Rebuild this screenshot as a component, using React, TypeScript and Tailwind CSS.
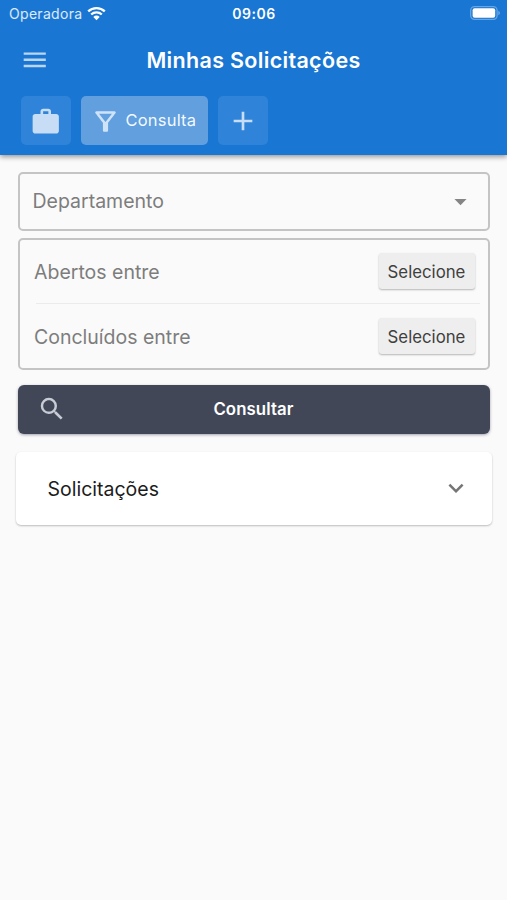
import type { ReactNode } from "react";
import {
  MdAdd,
  MdArrowDropDown,
  MdExpandMore,
  MdMenu,
  MdOutlineFilterAlt,
  MdSearch,
  MdWork,
} from "react-icons/md";

function WifiIcon() {
  return (
    <svg className="h-[15px] w-[19px]" viewBox="0 0 19 15" fill="none">
      <path
        d="M1.2 5.4a11.9 11.9 0 0 1 16.6 0M4.2 8.5a7.6 7.6 0 0 1 10.6 0"
        stroke="white"
        strokeWidth="2.3"
      />
      <path d="M6.3 10.9a4.6 4.6 0 0 1 6.4 0L9.5 14.2z" fill="white" />
    </svg>
  );
}

function BatteryIcon() {
  return (
    <svg className="h-[14px] w-[31px]" viewBox="0 0 31 14" fill="none">
      <rect
        x="0.7"
        y="0.7"
        width="26.4"
        height="12.6"
        rx="3.8"
        stroke="white"
        strokeOpacity="0.35"
        strokeWidth="1.3"
      />
      <rect x="2.6" y="2.3" width="22.6" height="9.4" rx="2" fill="white" />
      <path d="M28.4 4.8c2 .8 2 3.6 0 4.4z" fill="white" fillOpacity="0.4" />
    </svg>
  );
}

function StatusBar() {
  return (
    <div className="grid h-[26px] grid-cols-[1fr_auto_1fr] items-center pl-[9px] pr-[8px] text-[14px] text-white">
      <div className="flex items-center gap-[5px]">
        <span className="tracking-[0.3px] text-white/85">Operadora</span>
        <WifiIcon />
      </div>
      <span className="font-semibold tracking-[0.5px]">09:06</span>
      <div className="-mr-[2px] flex justify-end">
        <BatteryIcon />
      </div>
    </div>
  );
}

function TabButton({
  label,
  active = false,
  children,
}: {
  label: string;
  active?: boolean;
  children: ReactNode;
}) {
  return (
    <button
      type="button"
      aria-label={label}
      className={
        active
          ? "flex h-[49px] w-[127px] items-center gap-[5px] rounded-[5px] bg-[#619fdf] pl-[9px] text-[16.5px] tracking-[0.2px] text-white/95"
          : "flex h-[49px] w-[50px] items-center justify-center rounded-[5px] bg-[#2f83d8]"
      }
    >
      {children}
      {active && <span>{label}</span>}
    </button>
  );
}

function AppHeader() {
  return (
    <header className="h-[154.5px] bg-[#1976d2] shadow-[0_2px_5px_rgba(0,0,0,0.4)]">
      <StatusBar />
      <div className="grid h-[66px] grid-cols-[50px_1fr_50px] items-center px-5 pt-px">
        <MdMenu className="size-[29.5px] text-white/70" />
        <h1 className="pt-[2px] text-center text-[21.5px] font-semibold tracking-[0.32px] text-white">
          Minhas Solicitações
        </h1>
      </div>
      <nav className="flex gap-[10px] pl-[20.5px] pt-1">
        <TabButton label="Solicitações">
          <MdWork className="mt-[2px] size-[31.5px] text-[#c6ddf5]" />
        </TabButton>
        <TabButton label="Consulta" active>
          <MdOutlineFilterAlt className="mt-[2px] size-[31px] text-[#cfe3f8]" />
        </TabButton>
        <TabButton label="Adicionar">
          <MdAdd className="mt-px size-[32px] text-[#c6ddf5]" />
        </TabButton>
      </nav>
    </header>
  );
}

function DateRow({ label }: { label: string }) {
  return (
    <div className="flex h-16 items-center justify-between pl-[14.5px] pr-[13px]">
      <span className="pt-[2px] text-[19.5px] text-[#7d7d7d]">{label}</span>
      <button
        type="button"
        className="h-9 w-24 rounded-[3px] bg-[#eeeeee] pt-[2px] text-[16.8px] text-[#3f3f3f] shadow-[0_1px_2px_rgba(0,0,0,0.28)]"
      >
        Selecione
      </button>
    </div>
  );
}

export default function App() {
  return (
    <div className="min-h-[900px] w-full bg-[#fafafa] font-['Inter','Liberation_Sans',sans-serif]">
      <AppHeader />
      <main className="flex flex-col px-[17.5px] pt-[17px]">
        <div className="flex h-[59px] items-center justify-between rounded-[5px] border-2 border-[#c4c4c4] pl-[13px] pr-[12.5px]">
          <span className="pt-[2px] text-[19.5px] text-[#7d7d7d]">
            Departamento
          </span>
          <MdArrowDropDown className="size-[29px] text-[#858585]" />
        </div>
        <div className="mt-[7px] flex h-[132.5px] flex-col justify-center rounded-[5px] border-2 border-[#c4c4c4]">
          <DateRow label="Abertos entre" />
          <div className="ml-[16px] mr-2 h-px shrink-0 bg-[#ebebeb]" />
          <DateRow label="Concluídos entre" />
        </div>
        <button
          type="button"
          className="mt-[14.5px] grid h-[49px] grid-cols-[30px_1fr_30px] items-center rounded-[6px] bg-[#424757] px-[19px] text-white shadow-[0_1px_3px_rgba(30,30,70,0.4)]"
        >
          <MdSearch className="size-[30px] text-[#c8ccd6]" />
          <span className="pt-px text-[16.8px] font-semibold tracking-[0.1px]">
            Consultar
          </span>
        </button>
        <section className="-mx-[2px] mt-[18px] flex h-[73px] items-center justify-between rounded-[5px] bg-white pl-8 pr-[21px] shadow-[0_1px_2px_rgba(0,0,0,0.25)]">
          <h2 className="pt-[3px] text-[19.5px] text-[#1c1c1c]">Solicitações</h2>
          <MdExpandMore className="size-[30px] text-[#757575]" />
        </section>
      </main>
    </div>
  );
}
